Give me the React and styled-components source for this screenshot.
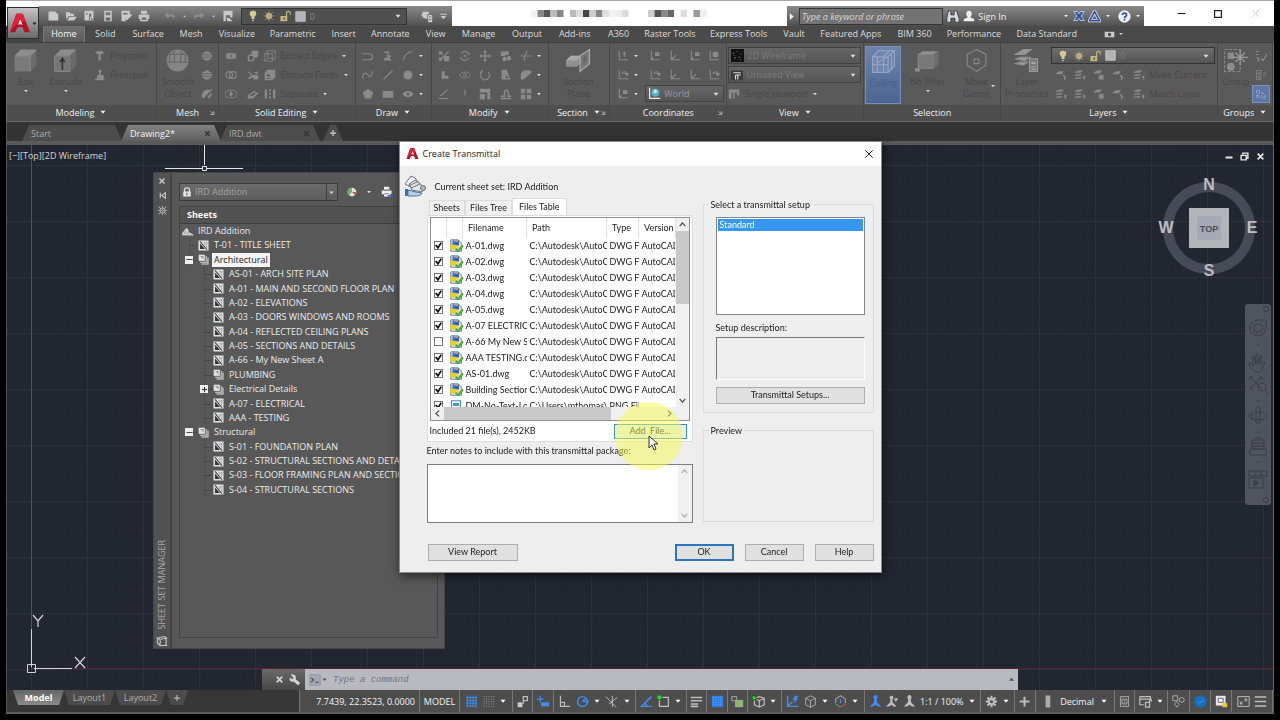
import React from "react";
import styled, { createGlobalStyle, css } from "styled-components";

const UI = `"Open Sans", "Noto Sans", sans-serif`;
const DIALOG = `Lato, "Liberation Sans", sans-serif`;

const GlobalStyle = createGlobalStyle`
    * { box-sizing: border-box; }
    body { margin: 0; background: #000; overflow: hidden; }
    button, input, select, textarea {
        font: inherit;
        color: inherit;
        margin: 0;
        padding: 0;
        border: 0;
        background: none;
        border-radius: 0;
        outline: none;
    }
    button { display: flex; align-items: center; justify-content: center; }
    svg { display: block; flex: none; }
`;

/* ---------- icons ---------- */

const ICONS = {
    caret: <path d="M3 5.500h10l-5 6z" fill="currentColor" />,
    caretUp: <path d="M2 11h12L8 4z" fill="currentColor" />,
    launcher: <path d="M3 3l7 7M11 4v8H3M13 13V4" stroke="currentColor" strokeWidth="2" fill="none" />,
    close: <path d="M3 3l10 10M13 3L3 13" stroke="currentColor" strokeWidth="3" fill="none" />,
    thinClose: <path d="M2 2l12 12M14 2L2 14" stroke="currentColor" strokeWidth="1.500" fill="none" />,
    plus: <path d="M8 2v12M2 8h12" stroke="currentColor" strokeWidth="2.500" fill="none" />,
    minus: <path d="M1 8h14" stroke="currentColor" strokeWidth="2" />,
    thickMinus: <path d="M1 11h14" stroke="currentColor" strokeWidth="4" />,
    restore: (
        <g fill="none" stroke="currentColor" strokeWidth="2.500">
            <path d="M2 6h9v8H2z" />
            <path d="M5 5V2h9v9h-2" />
        </g>
    ),
    chevUp: <path d="M3 11l5-6 5 6" stroke="currentColor" strokeWidth="2" fill="none" />,
    chevDown: <path d="M3 5l5 6 5-6" stroke="currentColor" strokeWidth="2" fill="none" />,
    chevLeft: <path d="M11 3L5 8l6 5" stroke="currentColor" strokeWidth="2" fill="none" />,
    chevRight: <path d="M5 3l6 5-6 5" stroke="currentColor" strokeWidth="2" fill="none" />,
    playRight: <path d="M5 2l7 6-7 6z" fill="currentColor" />,
    square: <path d="M2.500 2.500h11v11h-11z" stroke="currentColor" strokeWidth="2" fill="none" />,
    newFile: <path d="M2 2h9l4 4v8H2z" fill="currentColor" />,
    open: <path d="M1 3h5l2 2h4v3H5l-3 5zM6 9h10l-4 5H3z" fill="currentColor" />,
    openWeb: <path d="M2 1h12v13h-3V5H8v9H2zM4 4v2h2V4zM9 8l5 5h-3l-2 2z" fill="currentColor" fillRule="evenodd" />,
    save: <path d="M3 1h10v14H3zM5 3v4h6V3zM5 10v4h6v-4z" fill="currentColor" fillRule="evenodd" />,
    saveAs: <path d="M2 1h11v5l-5 5v4H2zM4 4h6v2H4zM14 5l2 2-6 6-3 1 1-3z" fill="currentColor" fillRule="evenodd" />,
    print: <path d="M4 1h8v4H4zM1 6h14v6h-2v3H3v-3H1zM5 10h6v3H5z" fill="currentColor" fillRule="evenodd" />,
    undo: <path d="M6 3v3h6c3 0 3 5 1 7 0-3-1-4-3-4H6v3L1 7z" fill="currentColor" />,
    redo: <path d="M10 3v3H4c-3 0-3 5-1 7 0-3 1-4 3-4h4v3l5-5z" fill="currentColor" />,
    plot: <path d="M2 1h12v9h-3V7H5v8H2zM6 10l4 1 4 4H7z" fill="currentColor" />,
    sheets: <path d="M3 2h8v3h-2v6H7v-1H4V8H2V5h1zM10 6h5v9h-5zM11 8v1h3V8zM11 11v1h3v-1z" fill="currentColor" fillRule="evenodd" />,
    custom: <path d="M2 3h12v2H2zM3 7h10l-5 6z" fill="currentColor" />,
    bulb: <path d="M8 1c6 0 5 6 2 8v3H6V9C3 7 2 1 8 1zM7 13h2v2H7z" fill="#d6cb96" />,
    sun: (
        <g stroke="#a99a78" strokeWidth="1">
            <circle cx="8" cy="8" r="4" fill="#d9c494" />
            <path d="M8 1v14M1 8h14M3 3l10 10M13 3L3 13" />
        </g>
    ),
    unlock: (
        <g>
            <path d="M2 8h9v7H2z" fill="#c4ba78" />
            <path d="M10 8V4c0-3 5-3 5 0v2" stroke="#c4ba78" strokeWidth="1.500" fill="none" />
            <path d="M6 10h2v3H6z" fill="#555" />
        </g>
    ),
    swatch: <path d="M1 1h14v14H1z" fill="#b4b4b4" stroke="#ccc" />,
    binoculars: <path d="M3 1h3v5h4V1h3l3 9v5h-5v-5H6v5H1v-5z" fill="#d8dce6" stroke="#333" />,
    user: <path d="M8 1c5 0 4 7 2 8v1l5 2v3H1v-3l5-2V9C4 8 3 1 8 1z" fill="#eee" />,
    exchange: <path d="M1 2h5l2 3 2-3h5l-4 6 4 6h-5l-2-3-2 3H1l4-6z" fill="#3457a4" stroke="#dbe4f5" />,
    a360: (
        <g fill="none" stroke="#dfe5f5">
            <path d="M8 2l6 11H2z" strokeWidth="4" />
            <path d="M8 2l6 11H2z" stroke="#304f9a" strokeWidth="2" />
        </g>
    ),
    help: (
        <g>
            <circle cx="8" cy="8" r="7" fill="#e9effa" stroke="#fff" />
            <path d="M5.500 6c0-3 5-3 5 0 0 2-2.500 2-2.500 4M8 11v2" stroke="#2849a0" strokeWidth="2" fill="none" />
        </g>
    ),
    cube: (
        <g>
            <path d="M1 5l4-4h10l-4 4z" fill="#8d8d8d" />
            <path d="M1 5h10v10H1z" fill="#7a7a7a" />
            <path d="M11 5l4-4v10l-4 4z" fill="#6c6c6c" />
            <path d="M1 5h10v10M11 5l4-4" fill="none" stroke="#969696" strokeWidth=".5" />
        </g>
    ),
    extrude: (
        <g>
            <path d="M1 5l4-4h10l-4 4z" fill="#8d8d8d" />
            <path d="M1 5h10v10H1z" fill="#767676" stroke="#919191" strokeWidth=".5" />
            <path d="M11 5l4-4v10l-4 4z" fill="#696969" />
            <path d="M6 14V7M4.500 9L6 6.500 7.500 9" fill="none" stroke="#333" />
        </g>
    ),
    sphere: (
        <g>
            <circle cx="8" cy="8" r="7" fill="#858585" />
            <path d="M3 4h10v5H3zM6 4v5M10 4v5M6 2L5 4M10 2l1 2M1 9h14" stroke="#686868" strokeWidth=".8" fill="none" />
        </g>
    ),
    polysolid: <path d="M2 2l8-1 4 3-5 2v7l-3 2V6L2 4z" fill="currentColor" />,
    presspull: <path d="M6 1h4v3H9v4h4v6h2v1H1v-2h3V8h3V4H6z" fill="currentColor" />,
    meshBall: <path d="M5 2h6v2h3v2H2V4h3zM1 7h14v2H1zM2 10h12v2h-3v2H5v-2H2z" fill="currentColor" />,
    meshOff: <path d="M4 4c3-3 8-1 8-1l2-2 1 1L3 14l-1-1c-3-3 0-7 2-9zM8 13l6-7c1 5-2 8-6 7z" fill="currentColor" />,
    union: (
        <g>
            <path d="M5 4h6a4 4 0 010 8H5a4 4 0 010-8z" fill="currentColor" />
            <path d="M6 5c2 2 2 4 0 6M10 5c-2 2-2 4 0 6" stroke="#666" fill="none" />
        </g>
    ),
    subtract: (
        <g fill="none" stroke="currentColor" strokeWidth="1.500">
            <circle cx="5.500" cy="8" r="4.500" />
            <circle cx="10.500" cy="8" r="4.500" />
        </g>
    ),
    intersect: (
        <g>
            <path d="M5 3h6a5 5 0 010 10H5A5 5 0 015 3z" fill="none" stroke="currentColor" />
            <path d="M8 4c3 3 3 5 0 8-3-3-3-5 0-8z" fill="currentColor" />
        </g>
    ),
    boxes: <path d="M6 2l2-1h7v7l-2 2h-3v3l-2 2H1V8l2-2h3zM3 8v5h5V8z" fill="currentColor" fillRule="evenodd" />,
    slice: <path d="M2 3l6 5 7 0v6H9L8 11l-6 3v-3l4-2-5-5zM9 5l5-2v4z" fill="currentColor" />,
    thicken: <path d="M1 10l8-6 6 3-7 7H1zM4 10l5-4 3 1-5 4z" fill="currentColor" fillRule="evenodd" />,
    edges: <path d="M1 5h10v10H1zM5 1h10v10H5zM1 5l4-4M11 5l4-4M11 15l4-4M1 15l4-4" fill="none" stroke="currentColor" />,
    faces: <path d="M1 5l4-4h10v10l-4 4H1zM3 12h6v1H3zM5 11V9H3l3-3 3 3H7v2z" fill="currentColor" fillRule="evenodd" />,
    separate: <path d="M1 2h3v12H1zM12 2h3v12h-3zM7 1h2v3H7zM7 6h2v3H7zM7 11h2v3H7z" fill="currentColor" />,
    polyline: <path d="M1 5h9c5 0 5 8 0 8H1" fill="none" stroke="currentColor" strokeWidth="1.500" />,
    helix: <path d="M3 2h8l-3 3 4 3-2 2 3 4H2l2-4h5L5 7h4L6 4H3z" fill="currentColor" />,
    arc: <path d="M2 14C3 7 6 3 14 2" fill="none" stroke="currentColor" strokeWidth="1.500" />,
    spline: <path d="M1 13C1 3 6 5 8 8s5 4 6-5" fill="none" stroke="currentColor" strokeWidth="1.500" />,
    line: <path d="M2 14L14 2" stroke="currentColor" strokeWidth="1.500" />,
    circle: <circle cx="8" cy="8" r="6" fill="currentColor" />,
    polygon: <path d="M8 1l7 5-3 8H4L1 6z" fill="currentColor" />,
    rect: <path d="M1 4h14v9H1z" fill="currentColor" />,
    ellipse: (
        <g>
            <ellipse cx="8" cy="8" rx="7" ry="4" fill="currentColor" />
            <circle cx="8" cy="8" r="1.500" fill="#555" />
        </g>
    ),
    faceOff: (
        <g fill="currentColor">
            <path d="M1 2h5v4H1zM8 8h7v7H8zM1 10h4v4H1z" />
            <path d="M3 14L14 2" stroke="currentColor" strokeWidth="1.500" />
        </g>
    ),
    rotate3d: (
        <g fill="none" stroke="currentColor">
            <path d="M3 5c3-5 10-3 11 2M13 11c-4 5-10 3-11-2" strokeWidth="1.500" />
            <circle cx="8" cy="8" r="1.500" />
        </g>
    ),
    move: <path d="M8 0l3 3H9v4h4V5l3 3-3 3V9H9v4h2l-3 3-3-3h2V9H3v2L0 8l3-3v2h4V3H5z" fill="currentColor" />,
    copy: <path d="M1 2h6v6H1zM9 1a3 3 0 110 6 3 3 0 010-6zM6 9a3 3 0 110 6 3 3 0 010-6zM12 8a3 3 0 110 6 3 3 0 010-6z" fill="currentColor" />,
    trim: <path d="M1 8h5M9 8h6M9 1L5 14" fill="none" stroke="currentColor" strokeWidth="1.500" />,
    corner: <path d="M5 3h4v6h5v4H5z" fill="currentColor" />,
    eye: (
        <g fill="none" stroke="currentColor">
            <ellipse cx="8" cy="8" rx="7" ry="4" />
            <circle cx="8" cy="8" r="2" />
        </g>
    ),
    rotate: <path d="M4 4a6 6 0 108 0M4 4V1M4 4H1" fill="none" stroke="currentColor" strokeWidth="1.500" />,
    mirror: <path d="M2 1h7l5 13H2zM8 8l4 4H8z" fill="currentColor" fillRule="evenodd" />,
    fillet: <path d="M1 14V9c0-5 3-7 8-7h6v3L5 14z" fill="currentColor" />,
    lineBase: <path d="M1 14h13M3 11L13 2" fill="none" stroke="currentColor" strokeWidth="1.500" />,
    drop: <path d="M8 3v7M7 3h2" fill="none" stroke="currentColor" strokeWidth="1.500" />,
    scale: <path d="M1 1h14v14h-4V6H1zM1 8h7v7H1z" fill="currentColor" />,
    offset: <path d="M1 11h5V6c0-4 5-4 5 0v5h4M1 14h14" fill="none" stroke="currentColor" strokeWidth="2" />,
    array: <path d="M1 1h6v6H1zM9 1h6v6H9zM1 9h6v6H1zM9 9h6v6H9z" fill="currentColor" />,
    sectionPlane: (
        <g>
            <path d="M0 8l3-3h7v4l-3 3H0z" fill="#8f8f8f" />
            <path d="M0 8l3-3h7L7 8z" fill="#a8a8a8" />
            <path d="M9 5l6-4v9l-6 5z" fill="#777" stroke="#aaa" strokeWidth=".8" />
            <path d="M11 6l2-1v4l-2 1z" fill="#666" />
        </g>
    ),
    ucs: <path d="M3 1v12h12M3 13l6-6" fill="none" stroke="currentColor" strokeWidth="1.500" />,
    ucsPick: (
        <g>
            <path d="M3 1v12h12" fill="none" stroke="currentColor" strokeWidth="1.500" />
            <path d="M10 2l3 3h-2v4H9V5H7z" fill="currentColor" />
        </g>
    ),
    ucsBox: (
        <g>
            <path d="M3 1v12h12M3 13l3-3" fill="none" stroke="currentColor" strokeWidth="1.500" />
            <path d="M8 3h6v5H8z" fill="currentColor" />
        </g>
    ),
    ucsTurn: <path d="M3 1v12h12M7 7c0-5 6-4 6 0M13 9l-2-3h4z" fill="none" stroke="currentColor" strokeWidth="1.500" />,
    ucsGlobe: (
        <g>
            <path d="M3 1v12h12" fill="none" stroke="currentColor" strokeWidth="1.500" />
            <circle cx="10" cy="6" r="4" fill="currentColor" />
        </g>
    ),
    world: (
        <g>
            <path d="M2 1v13h13" fill="none" stroke="#eee" strokeWidth="1.500" />
            <circle cx="9" cy="7" r="5" fill="#4fb3c5" />
            <path d="M7 3c3 0 5 1 4 4l-4 1z" fill="#c6e9ee" />
        </g>
    ),
    visual: (
        <g>
            <path d="M0 0h16v16H0z" fill="#111" />
            <path d="M2 5h2M7 3h1M12 6h1M4 11h2M9 10h2M3 8h1M11 13h1" stroke="#999" />
        </g>
    ),
    viewIcon: (
        <g>
            <path d="M0 2h16v13H0z" fill="#3b3b3b" />
            <path d="M3 5h10M6 8h7M6 8v6M9 8v6" stroke="#ddd" strokeWidth="1.500" />
        </g>
    ),
    viewport: <path d="M1 2h14v8h-3V6H9v8H7V6H5v8H1z" fill="currentColor" />,
    culling: (
        <g fill="none" stroke="#93a5c6" strokeWidth=".8">
            <path d="M1 5h10v10H1zM1 5l4-4h10l-4 4M15 1v10l-4 4" fill="#7285aa" />
            <path d="M4 5v10M8 5v10M1 10h10M8 5l4-4M4 9l7-4M13 3v10" />
        </g>
    ),
    noFilter: (
        <g>
            <path d="M2 4l3-2h10l-3 2z" fill="#919191" />
            <path d="M2 4h10v9H2z" fill="#787878" stroke="#919191" strokeWidth=".5" />
            <path d="M12 4l3-2v9l-3 2z" fill="#6d6d6d" />
            <path d="M0 13h3v2H0z" fill="#929292" />
        </g>
    ),
    gizmo: <path d="M8 1l6 3v7l-6 4-6-4V4zM6.500 7h3v3h-3z" fill="none" stroke="#8a8a8a" strokeWidth=".7" />,
    layerProps: (
        <g>
            <path d="M1 4l5-3h5L7 4zM1 7l3-1h6L7 8zM1 10l3-1h5l-3 2z" fill="#989898" stroke="#8e8e8e" strokeWidth=".8" />
            <path d="M10 7h5v8h-5z" fill="#727272" stroke="#999" strokeWidth=".8" />
            <path d="M11.500 9h2v1h-2zM11 12h3M11 13.500h3" stroke="#aaa" strokeWidth=".7" fill="none" />
        </g>
    ),
    layer: <path d="M1 4l5-2h6L9 5H1zM1 8l3-1h7L8 9H1zM1 12l3-1h7l-3 2H1zM12 9h3v5h-2z" fill="currentColor" />,
    layerOne: <path d="M1 6l4-3h7L9 7H1zM10 8h2l3 3-2 4h-1v-4z" fill="currentColor" />,
    layerGear: (
        <g>
            <path d="M1 5l4-3h7L9 6H1z" fill="currentColor" />
            <path d="M11 7v8M7 11h8M8 8l6 6M14 8l-6 6" stroke="currentColor" strokeWidth="1.500" />
        </g>
    ),
    group: (
        <g>
            <path d="M1 1h10v14H1z" fill="none" stroke="#888" strokeDasharray="2 1" strokeWidth=".7" />
            <path d="M3 3h4v4H3z" fill="#8d8d8d" />
            <circle cx="5" cy="12" r="2.500" fill="#8d8d8d" />
            <path d="M11 1v10M6 6h10M8 3l6 6M14 3L8 9" stroke="#999" strokeWidth=".8" />
        </g>
    ),
    edit: <path d="M1 2h4M1 6h4M3 9v2h2v3H3M8 11l3 3 5-9" stroke="currentColor" strokeWidth="1.500" fill="none" />,
    groupList: <path d="M2 2h6v12H2zM11 5h4M11 8h4M4 5h2v2H4zM4 10h2v2H4z" stroke="currentColor" fill="none" />,
    groupSel: <path d="M2 3h4v4H2zM2 10h4v3H2zM9 5v9l2-2 1 3 2-1-2-3h3z" stroke="#9fb1d4" fill="none" strokeDasharray="3 1" />,
    pin: <path d="M4 3v10M7 8l6-5v10zM4 8h3" stroke="currentColor" strokeWidth="2" fill="none" />,
    gear: (
        <g stroke="currentColor" fill="none">
            <path d="M8 1v14M1 8h14M3 3l10 10M13 3L3 13" strokeWidth="2.500" />
            <circle cx="8" cy="8" r="4.500" fill="currentColor" />
            <circle cx="8" cy="8" r="2" fill="#555" stroke="none" />
        </g>
    ),
    gearLine: (
        <g stroke="currentColor" fill="none" strokeWidth="1.500">
            <path d="M1 1l3 3M15 1l-3 3M1 15l3-3M15 15l-3-3M8 0v3M8 13v3M0 8h3M13 8h3" />
            <path d="M4 4h8v8H4z" />
            <circle cx="8" cy="8" r="1.500" />
        </g>
    ),
    book: <path d="M2 4l9-2 3 2-9 2zM2 4v7l3 3h9l-1-3 1-2-1-2 1-3M5 6l1 3-1 2 1 2" stroke="currentColor" strokeWidth="1.500" fill="none" />,
    lock: <path d="M3 7V4c0-5 10-5 10 0v3h1v8H2V7zM5 7h6V4c0-2-6-2-6 0zM7 9v4h2V9z" fill="#e4e4e4" fillRule="evenodd" />,
    pie: (
        <g>
            <circle cx="8" cy="8" r="7" fill="#e6e0d0" />
            <path d="M8 1a7 7 0 00-5 12l5-5z" fill="#6fb26e" />
            <path d="M8 8l5 5a7 7 0 002-5z" fill="#c45b52" />
        </g>
    ),
    publish: (
        <g>
            <path d="M4 1h7v4H4zM1 6h13v5H1zM4 11h8v3H4z" fill="#f0f0f0" />
            <path d="M4 5h7v1H4zM4 10h7v1H4z" fill="#666" />
            <path d="M9 12h4v-2l3 3-3 3v-2H9z" fill="#3b67c6" />
        </g>
    ),
    sheetSet: (
        <g>
            <path d="M0 11l6-8 3 2 1 4 6 3v2H1z" fill="#e0e0e0" />
            <path d="M2 12l4-6M5 12l4-4M8 12l2-2M1 14l14-1" stroke="#666" fill="none" />
        </g>
    ),
    sheet: (
        <g>
            <path d="M1 1h14v14H1z" fill="#e8eaec" stroke="#b4b4b4" />
            <path d="M3 5l7 8H3z" fill="#2e3338" />
            <path d="M3 2l10 12" stroke="#444" strokeWidth="1.500" />
            <path d="M10 3v5M12.500 3v9M8 4h6" stroke="#999" fill="none" />
        </g>
    ),
    subset: (
        <g>
            <path d="M14.500 5v9.500H5" stroke="#e6e6e6" strokeWidth="1.500" fill="none" />
            <path d="M12 3v9H3" stroke="#d2d2d2" strokeWidth="1.500" fill="none" />
            <path d="M1 1h9v9H1z" fill="#e2e2e2" />
            <path d="M3 3h5v5z" fill="#9a9a9a" />
        </g>
    ),
    wrench: <path d="M2 1l4 4-1 2-4-2c-1 5 3 6 5 5l6 5 3-3-6-5c1-4-1-7-7-6z" fill="currentColor" />,
    prompt: (
        <g>
            <path d="M1 1h14v14H1z" fill="#a4a8b4" stroke="#8b8f9b" />
            <path d="M3 5l3 3-3 3M8 11h5" stroke="#4a4d56" strokeWidth="1.500" fill="none" />
        </g>
    ),
    grid: <path d="M3 1v14M6.500 1v14M10 1v14M13.500 1v14M1 3h14M1 6.500h14M1 10h14M1 13.500h14" stroke="#3f86e6" strokeWidth="1.300" />,
    snap: <path d="M2 2h13M2 5h13M2 8h13M2 11h13M2 14h13" stroke="#bbb" strokeDasharray="1 2" />,
    infer: (
        <g>
            <path d="M2 9h6v6H2z" fill="#c8c8c8" />
            <path d="M9 11V2h5v5H9" stroke="currentColor" strokeWidth="1.500" fill="none" />
        </g>
    ),
    dynamic: (
        <g>
            <path d="M4 1v8M0 5h8" stroke="#3f8df2" strokeWidth="1.500" />
            <path d="M5 9h10v5H5z" fill="#3f8df2" />
        </g>
    ),
    ortho: <path d="M3 1v13h12M3 9h5v5" stroke="currentColor" strokeWidth="1.500" fill="none" />,
    polar: (
        <g fill="none" stroke="#3f8df2" strokeWidth="1.800">
            <circle cx="8" cy="8" r="6" />
            <path d="M8 8h8M8 8l4-4" />
        </g>
    ),
    iso: <path d="M1 2l13 13M9 1v14M15 3L5 11" stroke="currentColor" strokeWidth="1.200" />,
    track: <path d="M14 2L2 14h13M6 10l3 4" stroke="#3f8df2" strokeWidth="1.800" fill="none" />,
    osnap: (
        <g>
            <path d="M3 3h11v11H3z" stroke="currentColor" strokeWidth="1.500" fill="none" />
            <path d="M0 0h6v6H0z" fill="#22e02a" stroke="#123f13" />
        </g>
    ),
    weight: <path d="M1 3h14M1 7h14M1 11h9M1 14h9" stroke="currentColor" strokeWidth="2" />,
    transparency: (
        <g>
            <path d="M1 1h14v14H1z" fill="#2f7fe6" />
            <path d="M2 3h12M2 6h12M2 9h12M2 12h12" stroke="#6aa9f5" strokeDasharray="1.500 1.500" />
        </g>
    ),
    cycling: (
        <g>
            <path d="M1 2h6v5H1z" fill="none" stroke="#bbb" />
            <path d="M5 6h10v9H5z" fill="#8fb573" />
        </g>
    ),
    snap3d: (
        <g>
            <path d="M3 4l6-2 6 2v8l-6 3-6-3zM3 4l6 3 6-3M9 7v8" fill="none" stroke="currentColor" strokeWidth="1.500" />
            <path d="M0 1h5v5H0z" fill="#22e02a" stroke="#123f13" />
        </g>
    ),
    ducs: (
        <g>
            <path d="M2 1v13h13M2 14l6-6" stroke="#3f8df2" strokeWidth="1.800" fill="none" />
            <path d="M11 1h4l-2 4h2l-6 6 2-5H8z" fill="#3f8df2" />
        </g>
    ),
    cubeLine: <path d="M2 4l6-3 6 3v8l-6 3-6-3zM2 4l6 3 6-3M8 7v8" fill="none" stroke="currentColor" />,
    gizmo3: (
        <g fill="none" strokeWidth="1.500">
            <path d="M2 10V5l6-4 6 4v5" stroke="#999" />
            <path d="M8 5v5" stroke="#3f8df2" />
            <path d="M8 15l6-4" stroke="#c94a43" />
            <path d="M8 15l-6-4" stroke="#4ba14f" />
        </g>
    ),
    anno: <path d="M8 0c3 0 3 4 1.500 5.500L10 9l5 5h-4l-3-2-3 2H1l5-5 .5-3.500C5 4 5 0 8 0z" fill="currentColor" />,
    annoPlus: (
        <g>
            <path d="M7 1c3 0 2 4 1 5v3l5 5H9l-2-2-3 2H0l5-5 .5-3.500C4 4 4 1 7 1z" fill="currentColor" />
            <path d="M10 4h5l-3 5z" fill="currentColor" />
        </g>
    ),
    units: <path d="M6 1h5v14H6z" fill="#aaa" stroke="#ccc" strokeDasharray="1 1" />,
    calc: <path d="M3 2h10v12H3zM5 5h6v6H5zM7 7h2M7 9h2" fill="none" stroke="currentColor" />,
    lockUi: <path d="M1 2h13v5M1 5h12M1 2v10h5M8 9h5v6H8zM13 9V7c0-2 3-2 3 0v2" fill="none" stroke="currentColor" strokeWidth="1.500" />,
    isolate: <path d="M1 1h6v6H1zM12 3a3 3 0 110 6 3 3 0 010-6zM6 8l3 4-3 3-3-4z" fill="none" stroke="currentColor" />,
    hardware: (
        <g>
            <circle cx="8" cy="8" r="7.500" fill="#1272c8" />
            <path d="M5 8l2 2 5-4" stroke="#54a8f0" fill="none" />
        </g>
    ),
    trusted: (
        <g>
            <path d="M1 1h12v12H1z" fill="#e8e8ee" />
            <path d="M4 4h6v5H4z" fill="#fff" stroke="#446" />
            <path d="M9 10h6v5H9z" fill="#f0c63a" />
        </g>
    ),
    clean: <path d="M1 2h14v12H1zM4 11l3-3M4 8v3h3M9 8l3-3M9 5h3v3" fill="none" stroke="currentColor" strokeWidth="1.200" />,
    menu: <path d="M1 2.500h14M1 8h14M1 13.500h14" stroke="currentColor" strokeWidth="2" />,
    tick: <path d="M3 7l4 5 6-9" stroke="#111" strokeWidth="3" fill="none" />,
    dwg: (
        <g>
            <path d="M1 1h9l4 4v10H1z" fill="#e9eef5" stroke="#4a6488" />
            <path d="M3 2h8v6H3z" fill="#315f9f" />
            <path d="M4 5c2-3 4-1 6-2" stroke="#b9d0ea" fill="none" />
            <path d="M0 7h8v6H0z" fill="#e0cc3c" />
            <path d="M8 9h5v4H8z" fill="#e9dc66" />
            <path d="M7 12l3 3 6-7" stroke="#46ad3a" strokeWidth="2.500" fill="none" />
        </g>
    ),
    png: (
        <g>
            <path d="M2 1h12v14H2z" fill="#fff" stroke="#4f84bd" strokeWidth="1.500" />
            <path d="M4 4h8v4H4z" fill="#4f95d2" />
        </g>
    ),
    record: <path d="M1 4h14v8H1zM8 5.500a2.500 2.500 0 110 5 2.500 2.500 0 010-5z" fill="currentColor" fillRule="evenodd" />,
};

const Icon = ({ name, size = 12 }) => (
    <svg width={size} height={size} viewBox="0 0 16 16" aria-hidden="true">
        {ICONS[name]}
    </svg>
);

const LogoA = ({ size }) => (
    <svg width={size} height={size} viewBox="0 0 24 24" aria-hidden="true">
        <path d="M1 22L8 2h7l8 20h-6l-2-5c-4-2-7 0-8 5z" fill="#b11226" />
        <path d="M8 2h7l3 8-5 1-1-4-2 6c-4 2-6 5-9 9z" fill="#de2436" />
        <path d="M12 8l3 6c-2-1-4-1-5 0z" fill="#f3e4e6" />
    </svg>
);

/* ---------- frame and header ---------- */

const Frame = styled.div`
    height: 100vh;
    min-height: 600px;
    padding: 0 6px 6px;
    background: #000;
    font-family: ${UI};
    font-size: 9px;
    color: #e2e2e2;
    display: flex;
    flex-direction: column;
`;

const Header = styled.header`
    display: grid;
    grid-template-columns: 33px 1fr;
    background: #464646;
    border-top: 1px solid #a8a8a8;
    flex: none;
`;

const AppButton = styled.button`
    grid-row: 1 / 3;
    margin: 6px 0 3px 1px;
    z-index: 1;
    background: linear-gradient(#c4c4c4, #6a6a6a);
    border: 1px solid #2d2d2d;
    color: #222;
`;

const TitleBar = styled.div`
    height: 25px;
    display: flex;
    background: #fff;
    margin-left: -33px;
    padding-left: 33px;
`;

const QuickAccess = styled.div`
    margin-top: 5px;
    padding: 0 4px 0 8px;
    flex: 401 1 0;
    display: flex;
    align-items: center;
    justify-content: space-between;
    background: linear-gradient(#8a8a8a, #505050);
    color: #c9c9c9;
`;

const ToolButton = styled.button`
    flex: none;
    color: ${({ $dim }) => ($dim ? "#8c8c8c" : "inherit")};
`;

const LayerBox = styled.label`
    display: flex;
    align-items: center;
    gap: 4px;
    height: 17px;
    padding: 0 4px 0 5px;
    flex: ${({ $tall }) => ($tall ? "none" : "0 1 166px")};
    background: ${({ $tall }) => ($tall ? "linear-gradient(#6e6e6e, #545454)" : "#505050")};
    border: 1px solid #333;
    color: #808080;
`;

const Select = styled.select`
    appearance: none;
    flex: 1;
    min-width: 0;
    color: ${({ $tone }) => $tone || "#808080"};
`;

const WindowTitle = styled.div`
    flex: 334 1 0;
    display: flex;
    align-items: center;
    justify-content: center;
`;

const SearchArea = styled.div`
    flex: 354 1 0;
    margin-top: 5px;
    display: flex;
    align-items: center;
    justify-content: space-between;
    background: linear-gradient(#8a8a8a, #505050);
    padding-right: 3px;
    color: #f2f2f2;
`;

const SearchInput = styled.input`
    width: 144px;
    height: 17px;
    background: #737373;
    border: 1px solid #333;
    padding-left: 2px;
    font-style: italic;
    &::placeholder { color: #d6d6d6; opacity: 1; }
`;

const Divider = styled.i`
    width: ${({ $wide }) => ($wide ? "50px" : "1px")};
`;

const WindowButtons = styled.div`
    flex: 111 1 0;
    display: flex;
    align-items: center;
    justify-content: space-around;
    padding: 0 0 0 19px;
    color: #222;
`;

const CloseWindow = styled.button`
    color: #ccc;
`;

const RibbonTabs = styled.nav`
    height: 16px;
    display: flex;
    padding-left: 4px;
    background: #4a4a4a;
`;

const RibbonTab = styled.a`
    flex: ${({ $w }) => $w} 1 0;
    height: 17px;
    line-height: 15px;
    text-align: center;
    white-space: nowrap;
    text-decoration: none;
    color: #dcdcdc;
    ${({ $active }) => $active && css`
        background: linear-gradient(#707070, #5a5a5a);
        border: 1px solid #777;
        border-width: 0 1px;
        color: #f5f5f5;
    `}
`;

const TabEnd = styled.div`
    flex: 171 1 0;
    display: flex;
    align-items: center;
    gap: 3px;
    padding-left: 19px;
    color: #ccc;
`;

const Ribbon = styled.section`
    flex: none;
    display: flex;
    background: #5a5a5a;
    border: 1px solid #6c6c6c;
    border-top-color: #3f3f3f;
    height: 80px;
`;

const PanelBox = styled.div`
    flex: ${({ $w }) => $w} 1 0;
    min-width: 0;
    display: flex;
    flex-direction: column;
    border-right: 1px solid #474747;
`;

const PanelBody = styled.div`
    flex: 1;
    display: grid;
    grid-template-columns: ${({ $cols }) => $cols};
    padding: 3px 2px 0 1px;
    align-items: start;
    color: #8c8c8c;
    overflow: hidden;
`;

const PanelTitle = styled.div`
    height: 16px;
    padding-bottom: 2px;
    display: flex;
    align-items: center;
    justify-content: center;
    gap: 5px;
    position: relative;
    background: #4e4e4e;
    color: #f0f0f0;
`;

const Launcher = styled.button`
    position: absolute;
    right: 3px;
    top: 5px;
    color: #bbb;
`;

const Panel = ({ title, w, cols, arrow = true, launcher, children }) => (
    <PanelBox $w={w}>
        <PanelBody $cols={cols}>{children}</PanelBody>
        <PanelTitle>
            {title}
            {arrow && <Icon name="caret" size={8} />}
            {launcher && <Launcher aria-label={`${title} settings`}><Icon name="launcher" size={6} /></Launcher>}
        </PanelTitle>
    </PanelBox>
);

const BigButton = styled.button`
    flex-direction: column;
    justify-content: flex-start;
    height: 58px;
    padding-top: 2px;
    line-height: 12px;
    color: #474747;
    position: relative;
    white-space: nowrap;
    ${({ $active }) => $active && css`
        background: linear-gradient(#6d83ab, #4c6592);
        border: 1px solid #7a8fb8;
        color: #485e86;
    `}
    svg:first-child { margin-bottom: 3px; }
`;

const WhiteCaret = styled.span`
    color: #ddd;
    display: block;
`;

const SideCaret = styled(WhiteCaret)`
    position: absolute;
    right: 2px;
    bottom: 12px;
`;

const Big = ({ icon, lines, caret, side, active }) => (
    <BigButton $active={active}>
        <Icon name={icon} size={25} />
        {lines.map((l) => <span key={l}>{l}</span>)}
        {caret && <WhiteCaret><Icon name="caret" size={6} /></WhiteCaret>}
        {side && <SideCaret><Icon name="caret" size={6} /></SideCaret>}
    </BigButton>
);

const Stack = styled.div`
    display: grid;
    grid-auto-rows: 19px;
    align-items: center;
    min-width: 0;
`;

const SmallButton = styled.button`
    justify-content: ${({ $left }) => ($left ? "flex-start" : "center")};
    gap: 4px;
    height: 18px;
    white-space: nowrap;
    min-width: 0;
    color: #8a8a8a;
    ${({ $indent }) => $indent && css`padding-left: 6px;`}
    ${({ $active }) => $active && css`
        background: #5d76a5;
        border: 1px solid #7a92bf;
    `}
`;

const Faded = styled.span`
    color: #474747;
`;

const Small = ({ icon, label, caret, active, indent, size = 12 }) => (
    <SmallButton $left={!!label} $indent={indent} $active={active} aria-label={label ? undefined : icon}>
        <Icon name={icon} size={size} />
        {label && <Faded>{label}</Faded>}
        {caret && <WhiteCaret><Icon name="caret" size={6} /></WhiteCaret>}
    </SmallButton>
);

const Column = ({ icons, caret }) => (
    <Stack>{icons.map((icon, i) => <Small key={i} icon={icon} caret={caret} />)}</Stack>
);

const Combo = styled.label`
    display: flex;
    align-items: center;
    gap: 3px;
    height: 17px;
    padding: 0 3px 0 2px;
    background: linear-gradient(#666, #555);
    border: 1px solid #414141;
    color: #ddd;
`;

const CoordGrid = styled.div`
    display: grid;
    grid-template-columns: repeat(4, 1fr);
    grid-auto-rows: 19px;
    align-items: center;
    ${Combo} { grid-column: 1 / 5; }
`;

const LayerTools = styled.div`
    display: grid;
    grid-template-columns: repeat(4, 19px) 1fr;
    grid-auto-rows: 19px;
    align-items: center;
    ${LayerBox} { grid-column: 1 / 6; }
`;

const LayerCombo = ({ tall, label }) => (
    <LayerBox $tall={tall}>
        <Icon name="bulb" />
        <Icon name="sun" />
        <Icon name="unlock" />
        <Icon name="swatch" size={11} />
        <Select aria-label={label}><option>0</option></Select>
        <WhiteCaret><Icon name="caret" size={8} /></WhiteCaret>
    </LayerBox>
);

/* ---------- document tabs ---------- */

const DocTabs = styled.nav`
    flex: none;
    height: 23px;
    display: flex;
    align-items: flex-end;
    padding-left: 16px;
    background: #343434;
    border-bottom: 4px solid #5a5a5a;
    border-left: 1px solid #555;
    border-right: 1px solid #555;
`;

const DocTab = styled.a`
    width: ${({ $plus }) => ($plus ? "20px" : "100px")};
    height: 16px;
    display: flex;
    align-items: center;
    justify-content: ${({ $plus }) => ($plus ? "center" : "space-between")};
    padding: ${({ $plus }) => ($plus ? "0" : "0 10px 0 9px")};
    margin-left: ${({ $plus }) => ($plus ? "3px" : "-1px")};
    border-radius: 6px 6px 0 0;
    clip-path: polygon(7px 0, calc(100% - 7px) 0, 100% 100%, 0 100%);
    background: ${({ $active }) => ($active ? "linear-gradient(#818181, #5f5f5f)" : "#4d4d4d")};
    color: ${({ $active }) => ($active ? "#f4f4f4" : "#aaa")};
    text-decoration: none;
    svg { color: ${({ $plus }) => ($plus ? "#ccc" : "#333")}; }
`;

/* ---------- drawing area ---------- */

const Canvas = styled.main`
    flex: 1;
    position: relative;
    min-height: 0;
    overflow: hidden;
    border-left: 1px solid #555;
    border-right: 1px solid #666;
    background-color: #212631;
    background-image:
        linear-gradient(#2b313d 1px, transparent 1px),
        linear-gradient(90deg, #2b313d 1px, transparent 1px),
        linear-gradient(#232833 1px, transparent 1px),
        linear-gradient(90deg, #232833 1px, transparent 1px);
    background-size: 56px 56px, 56px 56px, 11px 11px, 11px 11px;
    background-position: 24px calc(100% + 35px), 24px 0, 24px calc(100% + 1px), 24px 0;
`;

const ViewLabel = styled.div`
    position: absolute;
    left: 2px;
    top: 4px;
    line-height: 14px;
    color: #d5d5d5;
`;

const AxisDrawing = styled.svg`
    position: absolute;
    left: 24px;
    bottom: 0;
    overflow: visible;
`;

const AxisX = styled.div`
    position: absolute;
    left: 24px;
    right: 0;
    bottom: 21px;
    height: 1px;
    background: #56222f;
`;

const AxisY = styled.div`
    position: absolute;
    left: 24px;
    top: 0;
    bottom: 21px;
    width: 1px;
    background: #2f6b33;
`;

const Crosshair = styled.svg`
    position: absolute;
    left: 158px;
    top: 0;
`;

const ViewButtons = styled.div`
    position: absolute;
    right: 8px;
    top: 7px;
    display: flex;
    gap: 7px;
    color: #e5e5e5;
`;

const Compass = styled.svg`
    position: absolute;
    right: 11px;
    top: 27px;
`;

const NavBar = styled.div`
    position: absolute;
    right: 2px;
    top: 159px;
    width: 26px;
    height: 201px;
    border-radius: 3px;
    background: #50545c;
`;

/* ---------- sheet set palette ---------- */

const Palette = styled.aside`
    position: absolute;
    left: 146px;
    top: 27px;
    width: 292px;
    height: 477px;
    display: grid;
    grid-template-columns: 18px 1fr;
    background: #585858;
    border: 1px solid #474747;
`;

const PaletteStrip = styled.div`
    display: flex;
    flex-direction: column;
    align-items: center;
    padding: 4px 0 1px;
    gap: 6px;
    background: #525252;
    border-right: 2px solid #444;
    color: #c4c4c4;
`;

const VerticalTitle = styled.div`
    writing-mode: vertical-rl;
    transform: rotate(180deg);
    margin-top: auto;
    color: #a9a9a9;
    line-height: 12px;
`;

const PaletteBody = styled.div`
    display: flex;
    flex-direction: column;
    padding: 9px 6px 10px 7px;
    min-width: 0;
`;

const PaletteTools = styled.div`
    display: flex;
    align-items: center;
    gap: 9px;
    height: 19px;
    margin-bottom: 5px;
`;

const SheetCombo = styled.label`
    width: 159px;
    height: 18px;
    display: flex;
    align-items: center;
    gap: 3px;
    padding-left: 2px;
    border: 1px solid #3b3b3b;
    background: linear-gradient(#6c6c6c, #5c5c5c);
    color: #ddd;
`;

const ComboArrow = styled.span`
    border-left: 1px solid #3f3f3f;
    align-self: stretch;
    padding: 5px 2px 0 1px;
`;

const TreeBox = styled.section`
    flex: 1;
    border: 1px solid #424242;
`;

const TreeTitle = styled.h2`
    margin: 0;
    padding-left: 7px;
    font-size: 9px;
    line-height: 16px;
    border-bottom: 1px solid #3e3e3e;
    background: #525252;
    color: #fff;
`;

const Tree = styled.ul`
    list-style: none;
    margin: 0;
    padding: 0;
    height: 273px;
    display: flex;
    flex-direction: column;
    justify-content: space-between;
    color: #ececec;
`;

const guide = (x) => css`
    background-image:
        repeating-linear-gradient(#444 0 1px, transparent 1px 2px),
        linear-gradient(#484848, #484848);
    background-size: 1px 100%, 8px 1px;
    background-position: ${x}px 0, ${x}px 7px;
    background-repeat: no-repeat;
`;

const TreeRow = styled.li`
    height: 14px;
    display: flex;
    align-items: center;
    gap: 5px;
    white-space: nowrap;
    overflow: hidden;
    padding-left: ${({ $depth }) => [2, 5, 20][$depth]}px;
    ${({ $depth }) => $depth === 1 && guide(9)}
    ${({ $depth }) => $depth === 2 && guide(24)}
`;

const Expander = styled.span`
    flex: none;
    width: 8px;
    height: 8px;
    visibility: ${({ $mark }) => ($mark ? "visible" : "hidden")};
    background: #eee;
    color: #333;
    display: flex;
    align-items: center;
    justify-content: center;
`;

const TreeName = styled.span`
    line-height: 14px;
    ${({ $selected }) => $selected && css`
        background: #f4f4f4;
        color: #222;
        padding: 0 2px;
        margin-left: -2px;
    `}
`;

const SHEETS = [
    [0, "sheetSet", "IRD Addition"],
    [1, "sheet", "T-01 - TITLE SHEET"],
    [1, "subset", "Architectural", "minus"],
    [2, "sheet", "AS-01 - ARCH SITE PLAN"],
    [2, "sheet", "A-01 - MAIN AND SECOND FLOOR PLAN"],
    [2, "sheet", "A-02 - ELEVATIONS"],
    [2, "sheet", "A-03 - DOORS WINDOWS AND ROOMS"],
    [2, "sheet", "A-04 - REFLECTED CEILING PLANS"],
    [2, "sheet", "A-05 - SECTIONS AND DETAILS"],
    [2, "sheet", "A-66 - My New Sheet A"],
    [2, "subset", "PLUMBING"],
    [2, "subset", "Electrical Details", "plus"],
    [2, "sheet", "A-07 - ELECTRICAL"],
    [2, "sheet", "AAA - TESTING"],
    [1, "subset", "Structural", "minus"],
    [2, "sheet", "S-01 - FOUNDATION PLAN"],
    [2, "sheet", "S-02 - STRUCTURAL SECTIONS AND DETAILS"],
    [2, "sheet", "S-03 - FLOOR FRAMING PLAN AND SECTIONS"],
    [2, "sheet", "S-04 - STRUCTURAL SECTIONS"],
];

/* ---------- command line and status bar ---------- */

const CommandLine = styled.label`
    position: absolute;
    left: 255px;
    right: 255px;
    bottom: 0;
    height: 21px;
    display: flex;
    align-items: center;
    background: #b9bac0;
    color: #555;
    padding-right: 3px;
`;

const CommandTools = styled.span`
    width: 43px;
    align-self: stretch;
    display: flex;
    align-items: center;
    justify-content: space-between;
    padding: 0 4px 0 2px;
    margin-right: 4px;
    background: linear-gradient(#6a6a6a, #474747);
    color: #d4d4d4;
`;

const Grip = styled.span`
    width: 5px;
    height: 14px;
    background: radial-gradient(#aaa 40%, transparent 50%) 0 0 / 2px 2px;
`;

const CommandInput = styled.input`
    flex: 1;
    margin-left: 5px;
    font-family: "Liberation Mono", monospace;
    font-style: italic;
    &::placeholder { color: #75767c; opacity: 1; }
`;

const BottomBar = styled.footer`
    flex: none;
    height: 24px;
    display: flex;
    background: #363636;
    border: 1px solid #555;
    border-top: 0;
    border-bottom: 2px solid #5c5c5c;
`;

const LayoutTabs = styled.nav`
    flex: 286 1 0;
    display: flex;
    padding-left: 6px;
`;

const LayoutTab = styled.a`
    width: ${({ $plus }) => ($plus ? "22px" : "51px")};
    height: 15px;
    display: flex;
    align-items: center;
    justify-content: center;
    border-radius: 0 0 6px 6px;
    clip-path: polygon(0 0, 100% 0, calc(100% - 5px) 100%, 5px 100%);
    background: ${({ $active }) => ($active ? "linear-gradient(#666, #8a8a8a)" : "#4c4c4c")};
    color: ${({ $active }) => ($active ? "#fff" : "#b0b0b0")};
    font-weight: ${({ $active }) => ($active ? 700 : 400)};
    text-decoration: none;
`;

const Status = styled.div`
    flex: 974 1 0;
    display: flex;
    background: #4d4d4d;
    border-left: 1px solid #777;
    color: #f4f4f4;
`;

const StatusGroup = styled.div`
    flex: ${({ $w }) => $w} 1 0;
    min-width: 0;
    display: flex;
    align-items: center;
    justify-content: ${({ $end }) => ($end ? "flex-end" : "space-evenly")};
    padding-right: ${({ $end }) => ($end ? "4px" : "0")};
    border-right: 1px solid #777;
    white-space: nowrap;
`;

const StatusButton = styled.button`
    color: ${({ $tone }) => $tone || "#bdbdbd"};
`;

const STATUS = [
    [118, ["7.7439, 22.3523, 0.0000"], true],
    [40, ["MODEL"]],
    [53, ["grid", "snap", "caret"]],
    [20, ["infer"]],
    [20, ["dynamic"]],
    [83, ["ortho", "polar", "caret", "iso", "caret"]],
    [51, ["track", "osnap", "caret"]],
    [20, ["weight"]],
    [20, ["transparency"]],
    [20, ["cycling"]],
    [33, ["snap3d", "caret"]],
    [84, ["ducs", "cubeLine", "caret", "gizmo3", "caret"]],
    [118, ["anno", "annoPlus", "anno", "1:1 / 100%", "caret"]],
    [34, ["gear", "caret"]],
    [20, ["plus"]],
    [80, ["units", "Decimal", "caret"]],
    [20, ["calc"]],
    [33, ["lockUi", "caret"]],
    [21, ["isolate"]],
    [21, ["hardware"]],
    [20, ["trusted"]],
    [41, ["clean", "menu"]],
];

/* ---------- dialog ---------- */

const Overlay = styled.div`
    position: fixed;
    inset: 0;
    display: flex;
    align-items: center;
    justify-content: center;
    padding-bottom: 7px;
`;

const Dialog = styled.div`
    width: 483px;
    background: #eeeeee;
    border: 1px solid #8a8a8a;
    box-shadow: 1px 3px 10px rgba(0, 0, 0, 0.6);
    font-family: ${DIALOG};
    color: #222;
    line-height: 12px;
`;

const DialogTitle = styled.div`
    height: 24px;
    padding: 0 7px 0 6px;
    display: flex;
    align-items: center;
    gap: 4px;
    background: #fff;
    font-family: ${UI};
    button { margin-left: auto; }
`;

const SetRow = styled.div`
    display: flex;
    align-items: center;
    gap: 8px;
    padding: 11px 0 0 4px;
    height: 32px;
`;

const Columns = styled.div`
    display: grid;
    grid-template-columns: 266px 1fr;
    gap: 10px;
    padding: 0 7px 0 27px;
`;

const FileTabs = styled.div`
    display: flex;
    align-items: flex-end;
    height: 17px;
    padding-left: 2px;
`;

const FileTab = styled.button`
    height: ${({ $active }) => ($active ? "17px" : "15px")};
    padding: 0 ${({ $active }) => ($active ? "6px" : "4px")};
    background: ${({ $active }) => ($active ? "#fff" : "#f0f0f0")};
    border: 1px solid #dcdcdc;
    border-bottom: 0;
`;

const TabPage = styled.div`
    background: #fff;
    border: 1px solid #dcdcdc;
    padding: 1px 2px;
`;

const TableFrame = styled.div`
    height: 204px;
    border: 1px solid #8d9097;
    display: grid;
    grid-template-columns: 1fr 13px;
    grid-template-rows: 1fr 13px;
`;

const TableClip = styled.div`
    overflow: hidden;
    min-height: 0;
`;

const FilesTable = styled.table`
    width: 100%;
    table-layout: fixed;
    border-collapse: collapse;
    th, td {
        padding: 0 0 0 3px;
        text-align: left;
        font-weight: 400;
        white-space: nowrap;
        overflow: hidden;
        height: 16px;
    }
    th {
        height: 20px;
        border-right: 1px solid #e2e2e2;
        padding-left: 5px;
    }
`;

const CheckBox = styled.label`
    display: grid;
    width: 9px;
    height: 9px;
    input, svg { grid-area: 1 / 1; }
    input {
        appearance: none;
        border: 1px solid #777;
        background: #fff;
    }
    svg { visibility: hidden; pointer-events: none; }
    input:checked + svg { visibility: visible; }
`;

const Check = ({ on, label }) => (
    <CheckBox>
        <input type="checkbox" defaultChecked={on} aria-label={label} />
        <Icon name="tick" size={9} />
    </CheckBox>
);

const Scroll = styled.div`
    display: flex;
    flex-direction: ${({ $across }) => ($across ? "row" : "column")};
    background: #f0f0f0;
    color: ${({ $off }) => ($off ? "#aaa" : "#444")};
    button { width: 13px; height: 13px; flex: none; }
`;

const Thumb = styled.div`
    flex: ${({ $size }) => $size} 1 0;
    background: #c9c9c9;
`;

const Track = styled.div`
    flex: ${({ $size }) => $size} 1 0;
`;

const Summary = styled.div`
    display: flex;
    align-items: center;
    justify-content: space-between;
    height: 19px;
    padding: 2px 3px 0 0;
`;

const Button = styled.button`
    width: ${({ $w }) => ($w ? `${$w}px` : "100%")};
    height: 17px;
    background: #e0e0e0;
    border: ${({ $main }) => ($main ? "2px solid #2a76c0" : "1px solid #adadad")};
`;

const AddFile = styled.div`
    position: relative;
    ${Button} { border-color: #3c8fd6; height: 15px; background: #e2effa; }
`;

const Halo = styled.div`
    position: absolute;
    left: 1px;
    top: -22px;
    width: 68px;
    height: 68px;
    border-radius: 50%;
    background: rgba(246, 250, 80, 0.5);
    pointer-events: none;
`;

const Pointer = styled.svg`
    position: absolute;
    left: 34px;
    top: 11px;
`;

const NotesLabel = styled.label`
    display: block;
    line-height: 18px;
`;

const NotesBox = styled.div`
    height: 59px;
    margin-top: 4px;
    display: grid;
    grid-template-columns: 1fr 14px;
    border: 1px solid #7d7d7d;
    background: #fff;
    textarea { resize: none; width: 100%; height: 100%; overflow: hidden; }
    ${Scroll} { justify-content: space-between; }
`;

const Side = styled.div`
    display: flex;
    flex-direction: column;
    gap: 12px;
    padding-top: 1px;
`;

const Group = styled.fieldset`
    margin: 0;
    min-width: 0;
    border: 1px solid #dcdcdc;
    padding: 6px 8px 8px 12px;
    legend { padding: 0 2px; margin-left: -7px; }
    select {
        display: block;
        width: 100%;
        height: 98px;
        border: 1px solid #82868c;
        background: #fff;
        overflow: hidden;
        padding: 1px;
    }
    option { padding: 0 2px; height: 12px; min-height: 0; background: #3696f3; color: #fff; }
`;

const FieldLabel = styled.label`
    display: block;
    line-height: 12px;
    padding: 7px 0 3px;
`;

const Description = styled.textarea`
    display: block;
    width: 100%;
    height: 43px;
    resize: none;
    border: 1px solid #fff !important;
    border-top-color: #777 !important;
    border-left-color: #777 !important;
    margin-bottom: 7px !important;
`;

const PreviewGroup = styled(Group)`
    height: 97px;
`;

const DialogFooter = styled.div`
    display: flex;
    gap: 11px;
    padding: 21px 7px 11px 28px;
    button:first-child { margin-right: auto; }
`;

const FILES = [
    ["A-01.dwg"], ["A-02.dwg"], ["A-03.dwg"], ["A-04.dwg"], ["A-05.dwg"],
    ["A-07 ELECTRICAL.dwg"], ["A-66 My New Sheet A.dwg", true], ["AAA TESTING.dwg"],
    ["AS-01.dwg"], ["Building Section.dwg"],
];

const RIBBON_TABS = [
    ["Home", 40], ["Solid", 41], ["Surface", 45], ["Mesh", 41], ["Visualize", 51], ["Parametric", 61],
    ["Insert", 41], ["Annotate", 53], ["View", 38], ["Manage", 48], ["Output", 49], ["Add-ins", 47],
    ["A360", 41], ["Raster Tools", 62], ["Express Tools", 76], ["Vault", 35], ["Featured Apps", 79],
    ["BIM 360", 49], ["Performance", 70], ["Data Standard", 76],
];

// grey blocks of the blanked out window title, null leaves a gap
const BLOCKS = [
    "#f2f2f2", "#888", "#555", "#bbb", "#888", null, "#bbb", "#ddd", "#444", "#ccc", "#888", "#ddd", "#f3f3f3", "#eee", "#ddd",
    null, null, null, "#ccc", "#555", "#888", "#666", null, "#ddd", null, "#999", "#eee",
];

const TitleHeader = () => (
    <Header>
        <AppButton aria-label="Application menu">
            <LogoA size={22} />
            <Icon name="caret" size={7} />
        </AppButton>
        <TitleBar>
            <QuickAccess>
                {["newFile", "open", "openWeb", "save", "saveAs", "print"].map((i) => (
                    <ToolButton key={i} aria-label={i}><Icon name={i} /></ToolButton>
                ))}
                <Divider />
                <ToolButton $dim aria-label="undo"><Icon name="undo" /></ToolButton>
                <Icon name="caret" size={5} />
                <ToolButton $dim aria-label="redo"><Icon name="redo" /></ToolButton>
                <Icon name="caret" size={5} />
                <ToolButton aria-label="plot"><Icon name="plot" /></ToolButton>
                <LayerCombo label="Current layer" />
                <Divider />
                <ToolButton aria-label="sheets"><Icon name="sheets" size={13} /></ToolButton>
                <ToolButton aria-label="customize"><Icon name="custom" size={9} /></ToolButton>
            </QuickAccess>
            <WindowTitle>
                <svg width="176" height="7" viewBox="0 0 176 7">
                    {BLOCKS.map((c, i) => c && <rect key={i} x={i * 6.5} y="0" width="6.5" height="7" fill={c} />)}
                </svg>
            </WindowTitle>
            <SearchArea>
                <Icon name="playRight" size={9} />
                <SearchInput placeholder="Type a keyword or phrase" aria-label="Search" />
                <ToolButton aria-label="find"><Icon name="binoculars" size={13} /></ToolButton>
                <Icon name="user" />
                <span>Sign In</span>
                <Divider $wide />
                <Icon name="caret" size={6} />
                <ToolButton aria-label="exchange"><Icon name="exchange" /></ToolButton>
                <ToolButton aria-label="a360"><Icon name="a360" size={13} /></ToolButton>
                <Icon name="caret" size={6} />
                <Divider />
                <ToolButton aria-label="help"><Icon name="help" size={13} /></ToolButton>
                <Icon name="caret" size={6} />
            </SearchArea>
            <WindowButtons>
                <button aria-label="Minimize"><Icon name="minus" size={9} /></button>
                <button aria-label="Maximize"><Icon name="square" size={10} /></button>
                <CloseWindow aria-label="Close"><Icon name="thinClose" size={9} /></CloseWindow>
            </WindowButtons>
        </TitleBar>
        <RibbonTabs>
            {RIBBON_TABS.map(([name, w], i) => (
                <RibbonTab key={name} href="#" $w={w} $active={i === 0}>{name}</RibbonTab>
            ))}
            <TabEnd><Icon name="record" size={11} /><Icon name="caret" size={6} /></TabEnd>
        </RibbonTabs>
    </Header>
);

const RibbonPanels = () => (
    <Ribbon>
        <Panel title="Modeling" w={150} cols="35px 45px 1fr">
            <Big icon="cube" lines={["Box"]} caret />
            <Big icon="extrude" lines={["Extrude"]} caret />
            <Stack>
                <Small icon="polysolid" label="Polysolid" indent />
                <Small icon="presspull" label="Presspull" indent />
            </Stack>
        </Panel>
        <Panel title="Mesh" w={62} cols="40px 1fr" arrow={false} launcher>
            <Big icon="sphere" lines={["Smooth", "Object"]} />
            <Column icons={["meshBall", "meshBall", "meshOff"]} />
        </Panel>
        <Panel title="Solid Editing" w={137} cols="22px 22px 1fr">
            <Column icons={["union", "subtract", "intersect"]} />
            <Column icons={["boxes", "slice", "thicken"]} />
            <Stack>
                <Small icon="edges" label="Extract Edges" caret />
                <Small icon="faces" label="Extrude Faces" caret />
                <Small icon="separate" label="Separate" caret />
            </Stack>
        </Panel>
        <Panel title="Draw" w={75} cols="22px 18px 1fr">
            <Column icons={["polyline", "spline", "polygon"]} />
            <Column icons={["helix", "line", "rect"]} />
            <Column icons={["arc", "circle", "ellipse"]} caret />
        </Panel>
        <Panel title="Modify" w={117} cols="22px 20px 20px 22px 1fr">
            <Column icons={["faceOff", "corner", "lineBase"]} />
            <Column icons={["rotate3d", "eye", "drop"]} />
            <Column icons={["move", "rotate", "scale"]} />
            <Column icons={["copy", "mirror", "offset"]} />
            <Column icons={["trim", "fillet", "array"]} caret />
        </Panel>
        <Panel title="Section" w={61} cols="1fr" launcher>
            <Big icon="sectionPlane" lines={["Section", "Plane"]} />
        </Panel>
        <Panel title="Coordinates" w={117} cols="34px 1fr" arrow={false} launcher>
            <Column icons={["ucsPick", "ucsTurn", "ucsBox"]} caret />
            <CoordGrid>
                <Small icon="ucsBox" />
                <Small icon="ucs" />
                <Small icon="ucsBox" />
                <Small icon="ucsGlobe" />
                <Small icon="ucsTurn" />
                <Small icon="ucs" />
                <Small icon="ucs" />
                <Small icon="ucsTurn" />
                <Combo>
                    <Icon name="world" size={13} />
                    <Select $tone="#9a9a9a" aria-label="UCS"><option>World</option></Select>
                    <Icon name="caret" size={8} />
                </Combo>
            </CoordGrid>
        </Panel>
        <Panel title="View" w={137} cols="1fr">
            <Stack>
                <Combo>
                    <Icon name="visual" size={13} />
                    <Select $tone="#7c7c7c" aria-label="Visual style"><option>2D Wireframe</option></Select>
                    <Icon name="caret" size={8} />
                </Combo>
                <Combo>
                    <Icon name="viewIcon" size={12} />
                    <Select $tone="#7c7c7c" aria-label="View"><option>Unsaved View</option></Select>
                    <Icon name="caret" size={8} />
                </Combo>
                <Small icon="viewport" label="Single viewport" caret />
            </Stack>
        </Panel>
        <Panel title="Selection" w={137} cols="36px 1fr 44px" arrow={false}>
            <Big icon="culling" lines={["Culling"]} active />
            <Big icon="noFilter" lines={["No Filter"]} caret />
            <Big icon="gizmo" lines={["Move", "Gizmo"]} side />
        </Panel>
        <Panel title="Layers" w={218} cols="49px 1fr">
            <Big icon="layerProps" lines={["Layer", "Properties"]} />
            <LayerTools>
                <LayerCombo tall label="Layer" />
                <Small icon="layerOne" />
                <Small icon="layer" />
                <Small icon="layerGear" />
                <Small icon="layerOne" />
                <Small icon="layer" label="Make Current" indent />
                <Small icon="layer" />
                <Small icon="layer" />
                <Small icon="layerGear" />
                <Small icon="layerOne" />
                <Small icon="layer" label="Match Layer" indent />
            </LayerTools>
        </Panel>
        <Panel title="Groups" w={54} cols="33px 1fr">
            <Big icon="group" lines={["Group"]} />
            <Stack>
                <Small icon="edit" />
                <Small icon="groupList" />
                <Small icon="groupSel" active />
            </Stack>
        </Panel>
    </Ribbon>
);

const SheetPalette = () => (
    <Palette>
        <PaletteStrip>
            <Icon name="close" size={8} />
            <Icon name="pin" size={9} />
            <Icon name="gearLine" size={9} />
            <VerticalTitle>SHEET SET MANAGER</VerticalTitle>
            <Icon name="book" size={12} />
        </PaletteStrip>
        <PaletteBody>
            <PaletteTools>
                <SheetCombo>
                    <Icon name="lock" size={10} />
                    <Select $tone="#a2a2a2" aria-label="Sheet set"><option>IRD Addition</option></Select>
                    <ComboArrow><Icon name="caret" size={7} /></ComboArrow>
                </SheetCombo>
                <Icon name="pie" size={10} />
                <Icon name="caret" size={6} />
                <Icon name="publish" size={12} />
                <Icon name="caret" size={6} />
            </PaletteTools>
            <TreeBox>
                <TreeTitle>Sheets</TreeTitle>
                <Tree>
                    {SHEETS.map(([depth, icon, name, mark]) => (
                        <TreeRow key={name} $depth={depth}>
                            {depth > 0 && <Expander $mark={mark}>{mark && <Icon name={mark} size={7} />}</Expander>}
                            <Icon name={icon} size={11} />
                            <TreeName $selected={name === "Architectural"}>{name}</TreeName>
                        </TreeRow>
                    ))}
                </Tree>
            </TreeBox>
        </PaletteBody>
    </Palette>
);

const DrawingArea = () => (
    <Canvas>
        <AxisX />
        <AxisY />
        <ViewLabel>[−][Top][2D Wireframe]</ViewLabel>
        <Crosshair width="80" height="30" viewBox="0 0 80 30" fill="none" stroke="#e6e6e6">
            <path d="M39.5 0v20M0 23.500h37M42 23.500h36M37.500 21.500h4v4h-4z" />
        </Crosshair>
        <ViewButtons>
            <Icon name="thickMinus" size={8} />
            <Icon name="restore" size={9} />
            <Icon name="close" size={9} />
        </ViewButtons>
        <Compass width="104" height="110" viewBox="0 0 104 110">
            <circle cx="51" cy="56" r="41" fill="none" stroke="#474b58" strokeWidth="10" />
            <rect x="31" y="36" width="40" height="40" fill="#b2b4b8" />
            <rect x="39" y="44" width="24" height="24" fill="#a4a9b5" />
            <g fontFamily="Liberation Sans, Arial, sans-serif" fontWeight="700" textAnchor="middle" fill="#bcbec4">
                <text x="51" y="60" fontSize="9" fill="#4a4e58">TOP</text>
                <text x="51" y="18" fontSize="16">N</text>
                <text x="51" y="104" fontSize="16">S</text>
                <text x="8" y="61" fontSize="16">W</text>
                <text x="94" y="61" fontSize="16">E</text>
            </g>
        </Compass>
        <NavBar>
            <svg width="26" height="201" viewBox="0 0 26 201" fill="none" stroke="#393d45" strokeWidth="1">
                <circle cx="21" cy="5" r="2.500" />
                <path d="M5 24a8 8 0 018-8h8v8a8 8 0 01-16 0z" />
                <rect x="9" y="20" width="8" height="8" rx="2" />
                <path d="M7 65c-3-4-4-6-2-6s3 2 4 3l-2-9h2l2 7v-10h2v10l3-9 1 1-2 9 4-4 1 2-3 5c-1 4-4 6-8 3z" />
                <path d="M5 73l12 12M17 73L5 85M5 76v-3h3M14 73h3v3M5 82v3h3" />
                <circle cx="17" cy="83" r="4" />
                <path d="M20 86l3 4" />
                <ellipse cx="13" cy="112" rx="9" ry="4" />
                <path d="M11 104v15h4v-15l-2-2zM7 110v5" />
                <path d="M7 136h12v9H7zM5 145h16v6H5zM7 139h12M7 142h12M9 134h8" />
                <path d="M4 167h18v5H4zM10 167v5M16 167v5M4 174h14v10H4z" />
                <path d="M9 176l4 3-4 3z" fill="#393d45" />
                <circle cx="21" cy="196" r="2.500" />
                <path d="M12 41h3M12 97h3M12 128h3M12 158h3" />
            </svg>
        </NavBar>
        <SheetPalette />
        <AxisDrawing width="60" height="80" viewBox="0 0 60 80" fill="none" stroke="#d5d5d5">
            <path d="M.5 19v38M3 58.500h38M-3.500 54.500h8v8h-8z" />
            <path d="M2 5l5 6 5-6M7 11v6M44 47l10 11M54 47L44 58" strokeWidth="1.200" />
        </AxisDrawing>
        <CommandLine>
            <CommandTools>
                <Grip />
                <Icon name="close" size={9} />
                <Icon name="wrench" size={12} />
            </CommandTools>
            <Icon name="prompt" size={12} />
            <Icon name="caret" size={7} />
            <CommandInput placeholder="Type a command" aria-label="Command" />
            <Icon name="caretUp" size={7} />
        </CommandLine>
    </Canvas>
);

const StatusItem = ({ item, first }) => {
    if (!ICONS[item]) return <span>{item}</span>;
    if (item === "caret") return <StatusButton $tone="#fff" aria-label="More"><Icon name="caret" size={8} /></StatusButton>;
    return (
        <StatusButton aria-label={item} $tone={item === "anno" && first ? "#3f8df2" : undefined}>
            <Icon name={item} size={13} />
        </StatusButton>
    );
};

const TransmittalDialog = () => (
    <Overlay>
        <Dialog role="dialog" aria-label="Create Transmittal">
            <DialogTitle>
                <LogoA size={13} />
                Create Transmittal
                <button aria-label="Close"><Icon name="thinClose" size={10} /></button>
            </DialogTitle>
            <SetRow>
                <svg width="23" height="24" viewBox="0 0 23 24" stroke="#6b727c" strokeWidth="1">
                    <path d="M1 9L7 1l4 2 5 6-2 5-9-3z" fill="#f8f8f8" />
                    <path d="M5 9l6-4 9 7-2 5-10-2z" fill="#e2e4e8" />
                    <path d="M4 11l9-4M7 13l9-4" fill="none" />
                    <circle cx="19" cy="13" r="2.500" fill="#bbb" />
                    <path d="M1 14h3v7H1z" fill="#3f6fa5" stroke="none" />
                    <path d="M4 15l8 2 6 1c-1 3-5 3-8 3H4z" fill="#b6cfe6" stroke="#4a75a3" />
                </svg>
                <span>Current sheet set: IRD Addition</span>
            </SetRow>
            <Columns>
                <div>
                    <FileTabs>
                        <FileTab>Sheets</FileTab>
                        <FileTab>Files Tree</FileTab>
                        <FileTab $active>Files Table</FileTab>
                    </FileTabs>
                    <TabPage>
                        <TableFrame>
                            <TableClip>
                                <FilesTable>
                                    <colgroup>
                                        <col width="16" /><col width="16" /><col width="64" />
                                        <col width="80" /><col width="32" /><col />
                                    </colgroup>
                                    <thead>
                                        <tr><th /><th /><th>Filename</th><th>Path</th><th>Type</th><th>Version</th></tr>
                                    </thead>
                                    <tbody>
                                        {FILES.map(([name, off]) => (
                                            <tr key={name}>
                                                <td><Check on={!off} label={name} /></td>
                                                <td><Icon name="dwg" size={13} /></td>
                                                <td>{name}</td>
                                                <td>C:\Autodesk\AutoCAD</td>
                                                <td>DWG File</td>
                                                <td>AutoCAD</td>
                                            </tr>
                                        ))}
                                        <tr>
                                            <td><Check on label="DM-No-Text-Logo.png" /></td>
                                            <td><Icon name="png" size={12} /></td>
                                            <td>DM-No-Text-Logo.png</td>
                                            <td>C:\Users\mthomas\Pictures</td>
                                            <td>PNG File</td>
                                            <td />
                                        </tr>
                                    </tbody>
                                </FilesTable>
                            </TableClip>
                            <Scroll>
                                <button aria-label="Up"><Icon name="chevUp" size={9} /></button>
                                <Thumb $size={73} />
                                <Track $size={89} />
                                <button aria-label="Down"><Icon name="chevDown" size={9} /></button>
                            </Scroll>
                            <Scroll $across>
                                <button aria-label="Left"><Icon name="chevLeft" size={9} /></button>
                                <Thumb $size={164} />
                                <Track $size={50} />
                                <button aria-label="Right"><Icon name="chevRight" size={9} /></button>
                            </Scroll>
                            <Scroll />
                        </TableFrame>
                        <Summary>
                            Included 21 file(s), 2452KB
                            <AddFile>
                                <Button $w={73}>Add&nbsp; File...</Button>
                                <Halo />
                                <Pointer width="11" height="16" viewBox="0 0 11 16">
                                    <path d="M1 1v12l3-3 2 5 2-1-2-5h4z" fill="#fff" stroke="#333" />
                                </Pointer>
                            </AddFile>
                        </Summary>
                    </TabPage>
                    <NotesLabel htmlFor="notes">Enter notes to include with this transmittal package:</NotesLabel>
                    <NotesBox>
                        <textarea id="notes" />
                        <Scroll $off>
                            <button aria-label="Notes up"><Icon name="chevUp" size={9} /></button>
                            <button aria-label="Notes down"><Icon name="chevDown" size={9} /></button>
                        </Scroll>
                    </NotesBox>
                </div>
                <Side>
                    <Group>
                        <legend>Select a transmittal setup</legend>
                        <select size="6" aria-label="Select a transmittal setup"><option>Standard</option></select>
                        <FieldLabel htmlFor="desc">Setup description:</FieldLabel>
                        <Description id="desc" readOnly />
                        <Button>Transmittal Setups...</Button>
                    </Group>
                    <PreviewGroup>
                        <legend>Preview</legend>
                    </PreviewGroup>
                </Side>
            </Columns>
            <DialogFooter>
                <Button $w={90}>View Report</Button>
                <Button $w={59} $main>OK</Button>
                <Button $w={59}>Cancel</Button>
                <Button $w={59}>Help</Button>
            </DialogFooter>
        </Dialog>
    </Overlay>
);

export default function App() {
    return (
        <Frame>
            <GlobalStyle />
            <TitleHeader />
            <RibbonPanels />
            <DocTabs>
                <DocTab href="#">Start</DocTab>
                <DocTab href="#" $active>Drawing2*<Icon name="close" size={7} /></DocTab>
                <DocTab href="#">IRD.dwt<Icon name="close" size={7} /></DocTab>
                <DocTab href="#" $plus aria-label="New drawing"><Icon name="plus" size={8} /></DocTab>
            </DocTabs>
            <DrawingArea />
            <BottomBar>
                <LayoutTabs>
                    <LayoutTab href="#" $active>Model</LayoutTab>
                    <LayoutTab href="#">Layout1</LayoutTab>
                    <LayoutTab href="#">Layout2</LayoutTab>
                    <LayoutTab href="#" $plus aria-label="New layout"><Icon name="plus" size={8} /></LayoutTab>
                </LayoutTabs>
                <Status>
                    {STATUS.map(([w, items, end], i) => (
                        <StatusGroup key={i} $w={w} $end={end}>
                            {items.map((item, j) => <StatusItem key={j} item={item} first={j === 0} />)}
                        </StatusGroup>
                    ))}
                </Status>
            </BottomBar>
            <TransmittalDialog />
        </Frame>
    );
}
